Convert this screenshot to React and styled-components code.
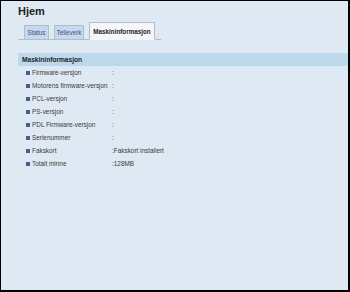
import React from "react";
import styled, { createGlobalStyle } from "styled-components";

const Global = createGlobalStyle`
  html, body { margin: 0; padding: 0; background: #dfe9f3; }
  body { font-family: "Liberation Sans", Arial, sans-serif; }
`;

const Frame = styled.div`
  box-sizing: border-box;
  width: 350px;
  height: 292px;
  background: #dfe9f3;
  border-style: solid;
  border-color: #000;
  border-width: 1px 2px 2px 1px;
  padding: 4px 0 0 17px;
  overflow: hidden;
`;

const Title = styled.h1`
  margin: 0;
  font-size: 11px;
  line-height: 13px;
  font-weight: bold;
  color: #1e1e1e;
`;

const TabRow = styled.div`
  display: flex;
  align-items: flex-end;
  gap: 5px;
  width: 143px;
  height: 17px;
  margin-top: 5px;
  padding-left: 6px;
  box-sizing: border-box;
  border-bottom: 1px solid #b4bcc6;
`;

const Tab = styled.div`
  box-sizing: border-box;
  width: ${(p) => p.$w}px;
  height: ${(p) => (p.$active ? "18px" : "14px")};
  margin-bottom: ${(p) => (p.$active ? "-1px" : "0")};
  display: flex;
  align-items: center;
  justify-content: center;
  font-size: 6.3px;
  font-weight: ${(p) => (p.$active ? "bold" : "normal")};
  color: ${(p) => (p.$active ? "#1a1a1a" : "#3f5270")};
  background: ${(p) => (p.$active ? "#f4f6f9" : "#c4d8ee")};
  border: 1px solid #b4bcc6;
  border-bottom: ${(p) => (p.$active ? "1px solid #f4f6f9" : "none")};
  white-space: nowrap;
`;

const SectionHeader = styled.div`
  margin-top: 13px;
  height: 13px;
  background: #bdd7ec;
  display: flex;
  align-items: center;
  padding-left: 4px;
  font-size: 6.6px;
  font-weight: bold;
  color: #1e1e1e;
`;

const Row = styled.div`
  display: flex;
  align-items: center;
  height: 13px;
  padding-left: 8px;
  font-size: 6.4px;
  color: #3a3a3a;
`;

const Bullet = styled.span`
  width: 4px;
  height: 4px;
  background: #44618e;
  margin-right: 2px;
  flex: none;
`;

const Label = styled.span`
  width: 80px;
  flex: none;
  white-space: nowrap;
`;

const Value = styled.span`
  white-space: nowrap;
`;

const rows = [
  ["Firmware-versjon", ""],
  ["Motorens firmware-versjon", ""],
  ["PCL-versjon", ""],
  ["PS-versjon", ""],
  ["PDL Firmware-versjon", ""],
  ["Serienummer", ""],
  ["Fakskort", "Fakskort installert"],
  ["Totalt minne", "128MB"],
];

export default function App() {
  return (
    <>
      <Global />
      <Frame>
        <Title>Hjem</Title>
        <TabRow>
          <Tab $w={25}>Status</Tab>
          <Tab $w={30}>Telleverk</Tab>
          <Tab $w={66} $active>Maskininformasjon</Tab>
        </TabRow>
        <SectionHeader>Maskininformasjon</SectionHeader>
        {rows.map(([label, value]) => (
          <Row key={label}>
            <Bullet />
            <Label>{label}</Label>
            <Value>:{value}</Value>
          </Row>
        ))}
      </Frame>
    </>
  );
}
